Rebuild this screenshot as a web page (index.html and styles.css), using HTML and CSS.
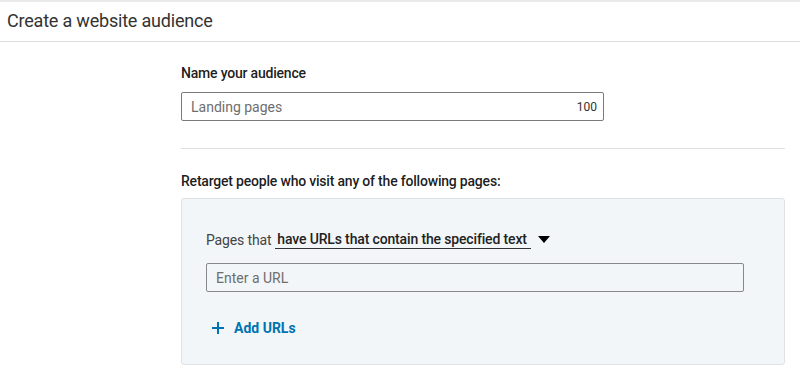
FILE: index.html
```html
<!DOCTYPE html>
<html>
<head>
<meta charset="utf-8">
<link rel="stylesheet" href="styles.css">
</head>
<body>
<div class="topstrip"></div>
<header class="header">Create a website audience</header>
<main class="content">
  <section class="name-section">
    <label class="label">Name your audience</label>
    <div class="text-input name-input">
      <span class="placeholder">Landing pages</span>
      <span class="counter">100</span>
    </div>
  </section>
  <hr class="divider">
  <section class="retarget">
    <div class="label">Retarget people who visit any of the following pages:</div>
    <div class="panel">
      <div class="rule-row">
        <span class="pages-that">Pages that</span>
        <span class="dropdown">have URLs that contain the specified text</span>
        <svg class="caret" width="12" height="8" viewBox="0 0 12 8"><path d="M0 0 L12 0 L6 7 Z" fill="#000"/></svg>
      </div>
      <div class="text-input url-input">
        <span class="placeholder">Enter a URL</span>
      </div>
      <div class="add-urls">
        <svg class="plus" width="12" height="12" viewBox="0 0 12 12"><path d="M6 0 V12 M0 6 H12" stroke="#0073b1" stroke-width="2"/></svg>
        <span>Add URLs</span>
      </div>
    </div>
  </section>
</main>
</body>
</html>
```
FILE: styles.css
```css
* { box-sizing: border-box; }
html, body { margin: 0; padding: 0; background: #fff; }
body {
  font-family: Roboto, "Liberation Sans", Arial, sans-serif;
  color: rgba(0,0,0,0.9);
  width: 800px;
  height: 382px;
  overflow: hidden;
}
.topstrip { height: 2px; background: #eaeaea; }
.header {
  height: 40px;
  border-bottom: 1px solid #dcdcdc;
  font-size: 18px;
  line-height: 38px;
  padding-left: 7px;
  color: #333;
  font-weight: 400;
  letter-spacing: -0.2px;
}
.content {
  padding: 22px 15px 0 181px;
}
.label {
  display: block;
  font-size: 14px;
  font-weight: 500;
  color: rgba(0,0,0,0.9);
  line-height: 18px;
  letter-spacing: -0.2px;
}
.text-input {
  display: flex;
  align-items: center;
  justify-content: space-between;
  border: 1px solid #7b7b7b;
  border-radius: 2px;
  font-size: 14px;
  color: #6e6e6e;
}
.name-input {
  width: 423px;
  height: 29px;
  margin-top: 10px;
  padding: 0 6px 0 9px;
}
.counter { font-size: 12px; color: #333; }
.divider {
  border: 0;
  border-top: 1px solid #e0e0e0;
  margin: 27px 0 0 0;
}
.retarget { padding-top: 23px; }
.panel {
  margin-top: 8px;
  height: 167px;
  background: #f3f6f8;
  border: 1px solid #dfe1e3;
  border-radius: 3px;
  padding: 31px 40px 0 24px;
}
.rule-row {
  display: flex;
  align-items: center;
  font-size: 14px;
  height: 20px;
  letter-spacing: -0.15px;
}
.pages-that { color: #444; margin-right: 4px; }
.dropdown {
  font-weight: 500;
  color: #222;
  border-bottom: 1px solid #333;
  line-height: 17px;
  padding: 0 4px 0 2px;
}
.caret { margin-left: 7px; }
.url-input {
  margin-top: 13px;
  height: 29px;
  padding-left: 9px;
  border-color: #888;
}
.add-urls {
  display: flex;
  align-items: center;
  margin-top: 28px;
  padding-left: 6px;
  color: #0073b1;
  font-size: 14px;
  font-weight: 700;
  gap: 10px;
}
```
